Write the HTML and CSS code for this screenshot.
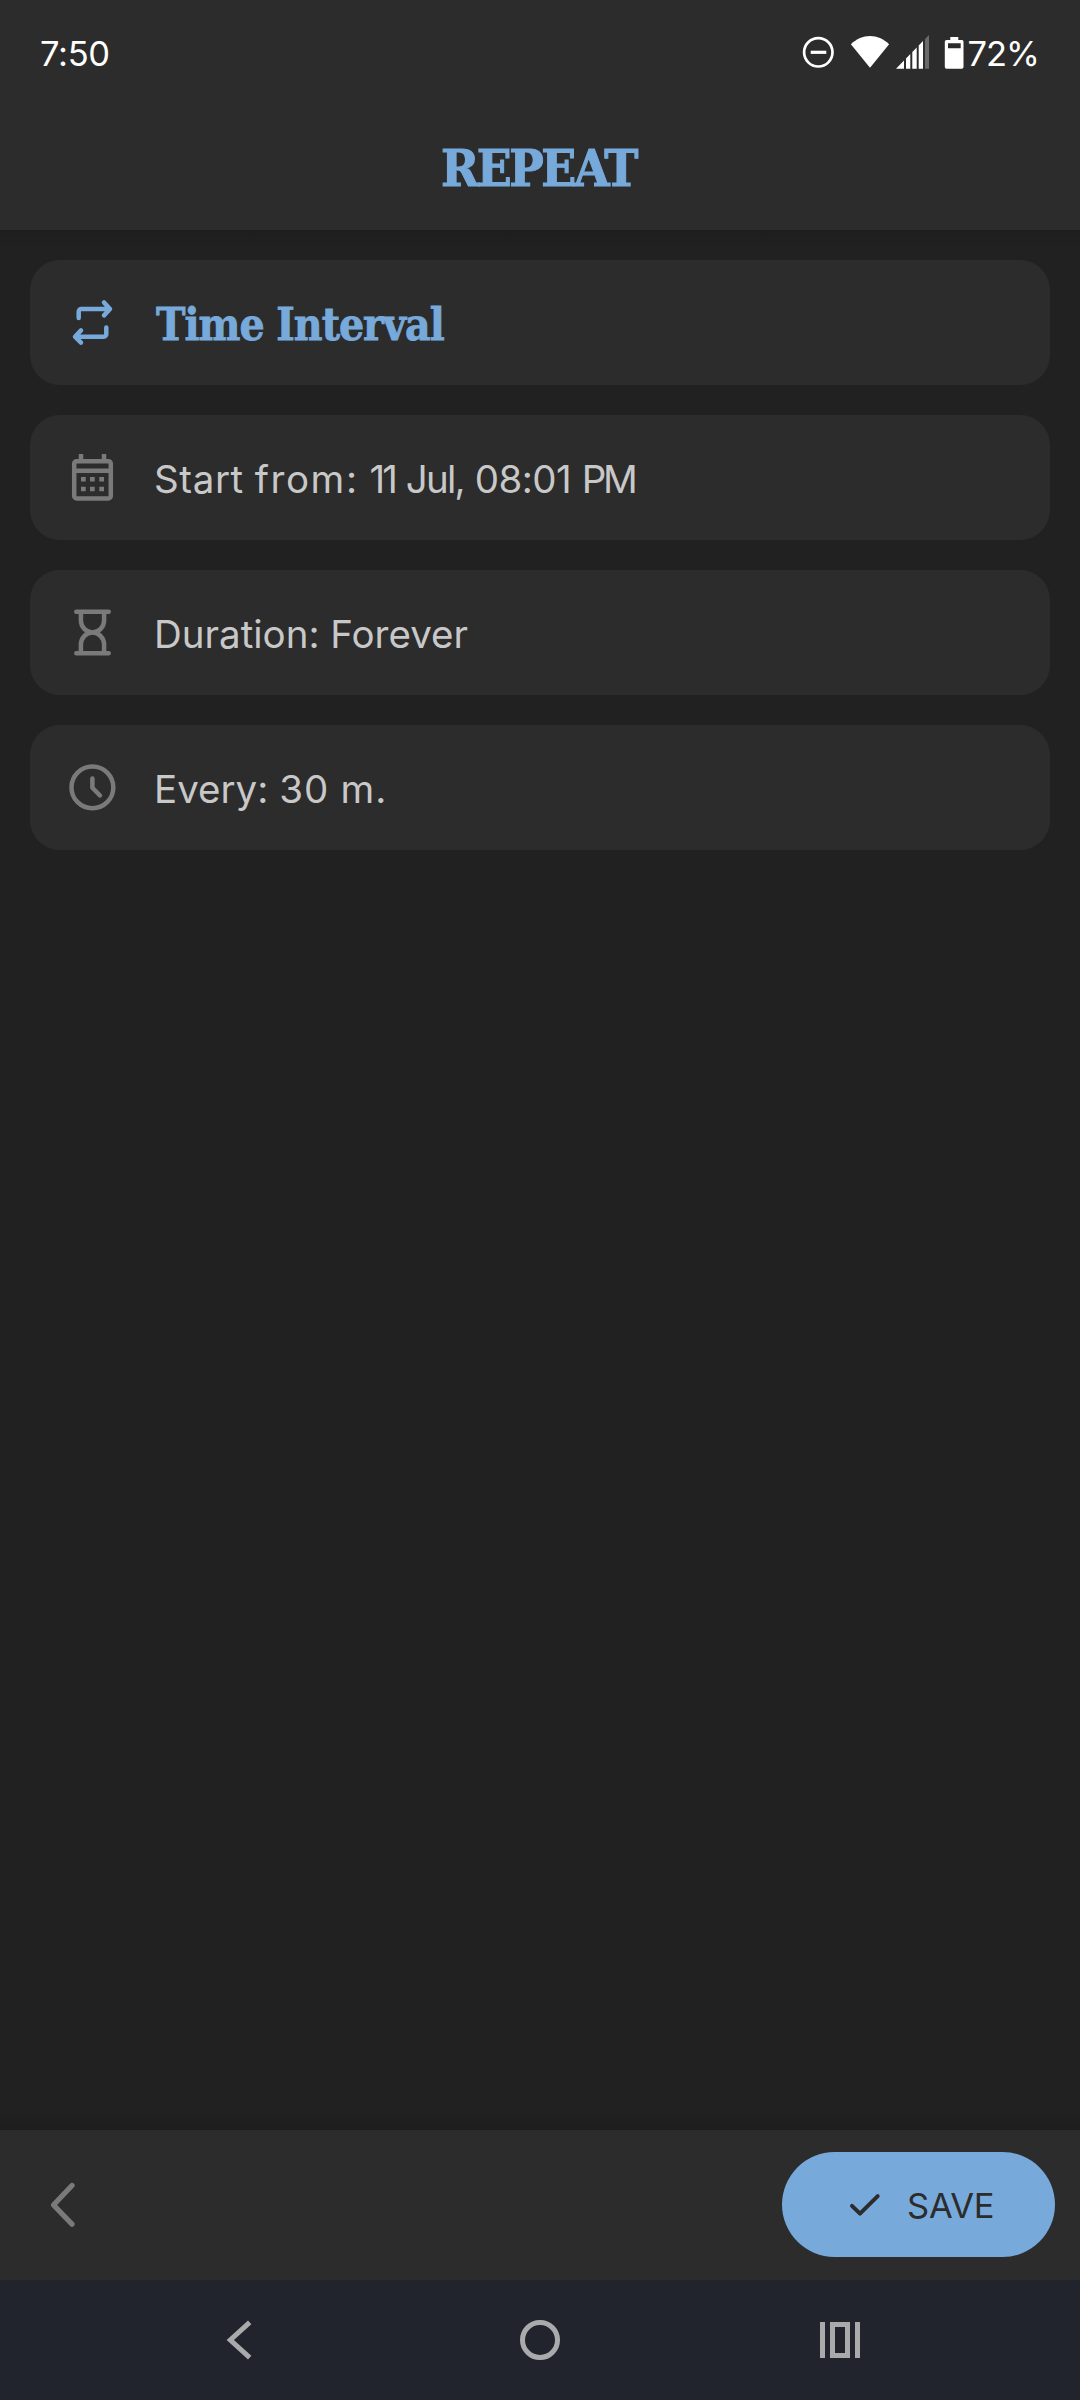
FILE: index.html
```html
<!DOCTYPE html>
<html lang="en">
<head>
<meta charset="utf-8">
<title>Repeat</title>
<link rel="stylesheet" href="styles.css">
</head>
<body>
<div class="screen">
  <header class="header">
    <div class="status">
      <span class="clock">7:50</span>
      <div class="status-icons">
        <svg class="dnd" width="36" height="36" viewBox="0 0 36 36"><circle cx="18.3" cy="18.3" r="14.2" fill="none" stroke="#fff" stroke-width="2.7"/><path d="M10.7 18.3h15.6" stroke="#fff" stroke-width="3.2"/></svg>
        <svg class="wifi" width="40" height="36" viewBox="0 0 40 36"><path d="M20 33.8L.9 10.2C6.500 4.800 13 2 20 2s13.500 2.800 19.100 8.200z" fill="#fff"/></svg>
        <svg class="signal" width="34" height="36" viewBox="0 0 34 36"><path fill="#fff" d="M0 34.700L8 26.500V34.700zM10 24.500L14.300 20.100V34.700H10zM16.300 18L20.700 13.600V34.700H16.300zM22.700 11.500L27 7.100V34.700H22.700z"/><path fill="#6a6a6a" d="M29 5.100L33 1V34.700H29z"/></svg>
        <svg class="battery" width="20" height="36" viewBox="0 0 20 36"><path fill="#fff" fill-rule="evenodd" d="M6.300 3h8v3H18a1.700 1.700 0 0 1 1.500 1.700v25.300a1.700 1.700 0 0 1-1.700 1.700H2.500a1.700 1.700 0 0 1-1.700-1.700V7.700A1.700 1.700 0 0 1 2.500 6h3.800zM4 9.300h12.700v5H4z"/></svg>
        <span class="percent">72%</span>
      </div>
    </div>
    <h1 class="title">REPEAT</h1>
  </header>

  <main class="content">
    <section class="card">
      <svg class="icon accent" viewBox="0 0 51 51"><path d="M11.700 21V14.500a2.500 2.500 0 0 1 2.500-2.500H42.500M37 5.400L43 12L37 18.400M39.300 30.600V37.200a2.500 2.500 0 0 1-2.500 2.500H8.500M14 33.400L8 39.700L14 45.700"/></svg>
      <span class="label heading">Time Interval</span>
    </section>
    <section class="card">
      <svg class="icon square" viewBox="0 0 51 51"><rect x="7.200" y="9.200" width="36.600" height="37.300" rx="2.500"/><path d="M7 18.700H44M14 2V8M37 2V8"/><path d="M14 27.300h4.700M23 27.300h4.700M32.300 27.300H37M14 37h4.700M23 37h4.700M32.300 37H37"/></svg>
      <span class="label"><span class="w-start">Start</span> <span class="w-from">from:</span> <span class="w-day">11</span> <span class="w-month">Jul,</span> <span class="w-time">08:01</span> <span class="w-pm">PM</span></span>
    </section>
    <section class="card">
      <svg class="icon" viewBox="0 0 51 51"><path d="M9.300 4.700H41.700M9.300 46.300H41.700M13.900 5v8.500a11.600 11.900 0 0 0 23.200 0V5M13.900 46v-8.500a11.600 11.900 0 0 1 23.200 0V46"/></svg>
      <span class="label">Duration: Forever</span>
    </section>
    <section class="card">
      <svg class="icon" viewBox="0 0 51 51"><circle cx="25.400" cy="25.400" r="20.900"/><path d="M25.400 16.500V25.700L33 33.500"/></svg>
      <span class="label">Every: <span class="w-count">30</span> <span class="w-unit">m.</span></span>
    </section>
  </main>

  <footer class="actions">
    <svg class="back" width="30" height="50" viewBox="0 0 30 50"><path d="M24 5.500L5.500 25L24 44.200"/></svg>
    <button class="save" type="button">
      <svg class="check" width="32" height="26" viewBox="0 0 32 26"><path d="M3 13.800L11 21.700L28.700 4.200"/></svg>
      <span>SAVE</span>
    </button>
  </footer>

  <nav class="nav">
    <svg width="40" height="40" viewBox="0 0 40 40"><path d="M29.700 2.300L10.300 20L29.700 37.700"/></svg>
    <svg width="40" height="40" viewBox="0 0 40 40"><circle cx="20" cy="20" r="17.500"/></svg>
    <svg width="40" height="40" viewBox="0 0 40 40"><path d="M2.500 2V38M37.500 2V38M12.500 4.500H27.500V35.500H12.500z"/></svg>
  </nav>
</div>
</body>
</html>
```
FILE: styles.css
```css
* { box-sizing: border-box; }

body {
  margin: 0;
  background: #212121;
  color: #c8c8c8;
  font-family: Inter, "Liberation Sans", sans-serif;
}

svg { display: block; flex: none; }

.screen {
  width: 1080px;
  height: 2400px;
  display: flex;
  flex-direction: column;
}

.header {
  height: 230px;
  background: #2c2c2c;
}

.status {
  height: 107px;
  padding: 0 41px 0 40px;
  display: flex;
  align-items: center;
  justify-content: space-between;
  color: #fff;
  font-size: 34.500px;
}

.clock { letter-spacing: -0.300px; }

.status-icons {
  display: flex;
  align-items: center;
}

.status-icons svg { margin-top: -3px; }

.wifi { margin-left: 14px; }
.signal { margin-left: 6px; }
.battery { margin-left: 14px; }
.percent { margin-left: 4px; letter-spacing: -1px; }

.title {
  margin: 0;
  text-align: center;
  color: #77aadb;
  font: bold 51px/123px "DejaVu Serif Condensed", "DejaVu Serif", serif;
  font-stretch: condensed;
  letter-spacing: -2.400px;
  text-indent: -3px;
  -webkit-text-stroke: 1px #77aadb;
}

.content {
  flex: 1;
  padding: 30px;
  display: flex;
  flex-direction: column;
  gap: 30px;
  background: linear-gradient(#1e1e1e, #212121 20px, #212121 calc(100% - 20px), #1e1e1e);
}

.card {
  height: 125px;
  padding-left: 37px;
  display: flex;
  align-items: center;
  border-radius: 30px;
  background: #2c2c2c;
}

.icon {
  width: 51px;
  height: 51px;
  fill: none;
  stroke: #7a7a7a;
  stroke-width: 4.500px;
  stroke-linecap: round;
  stroke-linejoin: round;
}

.icon.accent { stroke: #77aadb; }
.icon.square { stroke-linecap: butt; }

.label {
  margin-left: 36px;
  padding-top: 3px;
  font-size: 38.500px;
  white-space: pre;
}

.label.heading {
  margin-left: 38px;
  padding-top: 4px;
  color: #77aadb;
  font: bold 44px "DejaVu Serif Condensed", "DejaVu Serif", serif;
  letter-spacing: -1px;
  -webkit-text-stroke: 0.800px #77aadb;
}

.w-start { letter-spacing: 0.600px; }
.w-from { letter-spacing: 1.600px; }
.w-day { letter-spacing: -3px; }
.w-month { letter-spacing: -1.700px; }
.w-time { letter-spacing: -0.600px; }
.w-pm { letter-spacing: -3.500px; }
.w-count { letter-spacing: 1.200px; }
.w-unit { letter-spacing: 1px; }

.actions {
  height: 150px;
  padding: 0 25px 0 48px;
  display: flex;
  align-items: center;
  justify-content: space-between;
  background: #2c2c2c;
}

.back {
  fill: none;
  stroke: #7a7a7a;
  stroke-width: 5.300px;
  stroke-linecap: round;
  stroke-linejoin: round;
}

.save {
  width: 273px;
  height: 105px;
  margin-bottom: 1px;
  padding: 0 0 0 67px;
  display: flex;
  align-items: center;
  gap: 26px;
  border: 0;
  border-radius: 53px;
  background: #77aadb;
  color: #2c2c2c;
  font: 34.500px Inter, "Liberation Sans", sans-serif;
  letter-spacing: -0.200px;
}

.save span { padding-top: 1px; }

.check {
  fill: none;
  stroke: #2c2c2c;
  stroke-width: 4px;
  stroke-linecap: round;
  stroke-linejoin: round;
}

.nav {
  height: 120px;
  padding: 0 90px;
  display: grid;
  grid-template-columns: repeat(3, 1fr);
  align-items: center;
  justify-items: center;
  background: #21242c;
}

.nav svg {
  fill: none;
  stroke: #a9aaac;
  stroke-width: 5px;
}
```
